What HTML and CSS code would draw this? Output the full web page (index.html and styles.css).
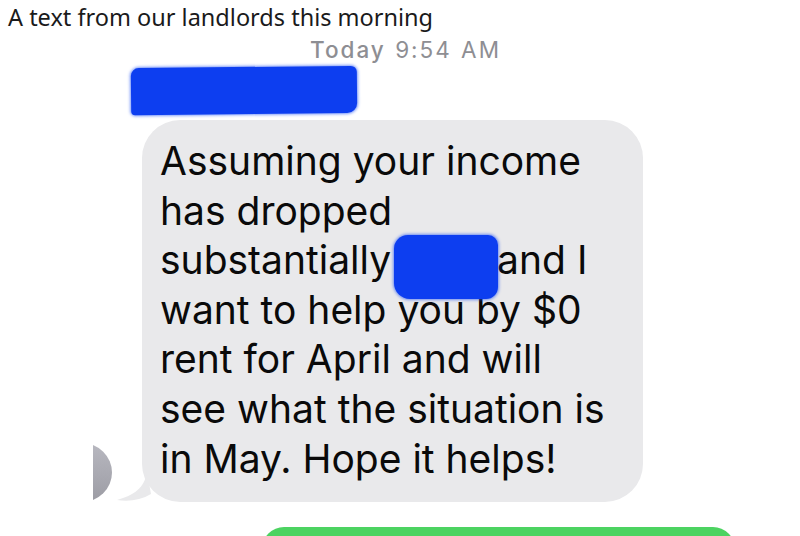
FILE: index.html
```html
<!DOCTYPE html>
<html>
<head>
<meta charset="utf-8">
<link rel="stylesheet" href="styles.css">
</head>
<body>
<div class="page">
  <h1 class="title">A text from our landlords this morning</h1>
  <div class="thread">
    <div class="stamp"><span class="day">Today</span> 9:54 AM</div>
    <div class="redact redact-name"></div>
    <div class="row">
      <div class="avatar"></div>
      <div class="bubble">
        <svg class="tail" width="34" height="30" viewBox="0 0 34 30"><path d="M30 0 C28 12 22 22 0 28 C12 30 24 28 34 22 Z" fill="#e9e9eb"/></svg>
        <p class="msg">Assuming your income<br>has dropped<br>substantially<span class="gap"><span class="redact redact-word"></span></span>and I<br>want to help you by $0<br>rent for April and will<br>see what the situation is<br>in May. Hope it helps!</p>
      </div>
    </div>
    <div class="sent"></div>
  </div>
</div>
</body>
</html>
```
FILE: styles.css
```css
html, body {
  margin: 0;
  padding: 0;
  background: #ffffff;
  overflow: hidden;
}
.page {
  width: 800px;
  height: 536px;
  position: relative;
  overflow: hidden;
}
.title {
  margin: 0;
  padding: 1px 0 0 8px;
  font-family: "Noto Sans", "Open Sans", sans-serif;
  font-weight: 400;
  font-size: 23.5px;
  line-height: 32px;
  color: #1a1a1b;
}
.thread {
  position: relative;
}
.stamp {
  padding-left: 310px;
  margin-top: 3px;
  font-family: Inter, "Liberation Sans", sans-serif;
  font-size: 22.5px;
  line-height: 28px;
  letter-spacing: 2px;
  word-spacing: 1px;
  color: #8e8e93;
}
.day {
  font-weight: 500;
}
.redact {
  background: #0d3ef0;
  box-shadow: 0 0 3px 1px rgba(30, 80, 245, 0.6);
}
.redact-name {
  position: absolute;
  left: 131px;
  top: 31px;
  width: 226px;
  height: 47px;
  border-radius: 8px 6px 10px 4px;
  transform: rotate(-0.6deg);
}
.row {
  display: flex;
  align-items: flex-end;
  margin-top: 56px;
}
.avatar {
  width: 19px;
  height: 59px;
  overflow: hidden;
  margin-left: 93px;
  margin-right: 30px;
  position: relative;
}
.avatar::before {
  content: "";
  position: absolute;
  left: -41px;
  top: 0;
  width: 60px;
  height: 59px;
  border-radius: 50%;
  background: linear-gradient(#b8b8c0, #9c9ca4);
}
.bubble {
  position: relative;
  width: 501px;
  height: 382px;
  background: #e9e9eb;
  border-radius: 38px;
  box-sizing: border-box;
  padding: 16px 0 0 18px;
}
.tail {
  position: absolute;
  left: -25px;
  bottom: 0;
}
.msg {
  margin: 0;
  font-family: Inter, "Liberation Sans", sans-serif;
  font-size: 39px;
  line-height: 49.6px;
  color: #0a0a0a;
}
.gap {
  display: inline-block;
  position: relative;
  width: 106px;
  height: 40px;
  vertical-align: -8px;
}
.redact-word {
  position: absolute;
  left: 3px;
  top: -7px;
  width: 104px;
  height: 64px;
  border-radius: 14px 10px 12px 16px;
}
.sent {
  margin: 25px 0 0 262px;
  width: 473px;
  height: 30px;
  border-radius: 22px 22px 0 0;
  background: #4cd361;
}
```
